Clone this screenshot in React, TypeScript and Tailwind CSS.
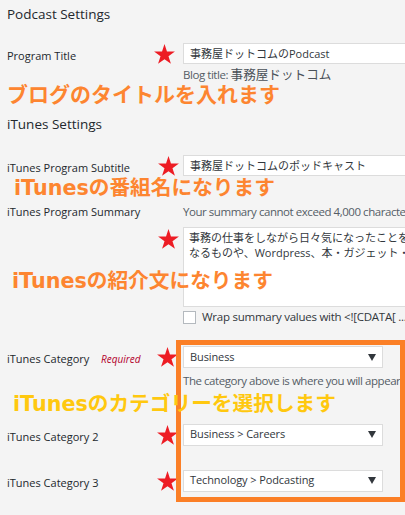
import React from "react";

const StarSvg = () => (
  <svg width="21" height="20" viewBox="0 0 20 19.1">
    <polygon
      fill="#ed1c24"
      points="10,0 12.35,7.24 19.96,7.24 13.8,11.71 16.15,18.95 10,14.47 3.85,18.95 6.2,11.71 0.04,7.24 7.65,7.24"
    />
  </svg>
);

const Star = ({ pl = "pl-[7px]" }: { pl?: string }) => (
  <div className={`w-[36px] shrink-0 flex items-center ${pl}`}>
    <StarSvg />
  </div>
);

const Arrow = () => (
  <svg width="8" height="7" viewBox="0 0 8 7" className="shrink-0">
    <polygon points="0,0 8,0 4,7" fill="#32373c" />
  </svg>
);

const Select = ({ value }: { value: string }) => (
  <div className="w-[200px] h-[22px] shrink-0 bg-white border border-[#dcdcdc] flex items-center justify-between pl-[6px] pr-[6px] text-[11px] tracking-[-0.1px] text-[#32373c]">
    <span>{value}</span>
    <Arrow />
  </div>
);

const label = "w-[147px] shrink-0 pl-[7px] text-[11px] text-[#23282d] leading-[16px]";
const desc = "text-[11.5px] tracking-[-0.45px] leading-[16px] text-[#555d66] whitespace-nowrap";
const note =
  "font-['DejaVu_Sans','Noto_Sans_CJK_JP',sans-serif] font-bold text-[20.7px] leading-[24px] whitespace-nowrap";
const field =
  "w-[240px] shrink-0 h-[21px] bg-white border border-[#dcdcdc] pl-[6px] text-[11px] leading-[19px] text-[#32373c] whitespace-nowrap";

export default function App() {
  return (
    <div className="w-[405px] h-[515px] bg-[#f4f4f4] overflow-hidden font-['Open_Sans','Noto_Sans_CJK_JP',sans-serif] text-[#23282d]">
      <div className="pl-[7px] pt-[4px] h-[43px] text-[13.5px] leading-[20px] font-medium">
        Podcast Settings
      </div>

      {/* Program Title */}
      <div className="flex h-[21px] items-center">
        <div className={`${label} pt-[4px]`}>Program Title</div>
        <Star pl="pl-[7px]" />
        <div className={field}>事務屋ドットコムのPodcast</div>
      </div>
      <div className={`pl-[183px] mt-[3px] h-[16px] ${desc}`}>
        Blog title: <span className="text-[12.6px] tracking-normal text-[#4a5158]">事務屋ドットコム</span>
      </div>
      <div className={`${note} pl-[7px] h-[24px] text-[#fd8530] text-[21px]`}>
        ブログのタイトルを入れます
      </div>

      <div className="pl-[7px] mt-[7px] h-[20px] text-[13.5px] leading-[20px] font-medium">
        iTunes Settings
      </div>

      {/* Subtitle */}
      <div className="flex h-[21px] items-center mt-[21px]">
        <div className={`${label} pt-[4px]`}>iTunes Program Subtitle</div>
        <Star pl="pl-[11px]" />
        <div className={field}>事務屋ドットコムのポッドキャスト</div>
      </div>
      <div className={`${note} pl-[14px] h-[24px] text-[#fd8530]`}>iTunesの番組名になります</div>

      {/* Summary */}
      <div className="flex h-[16px] mt-[4px]">
        <div className="w-[183px] shrink-0 pl-[7px] text-[11px] leading-[16px]">iTunes Program Summary</div>
        <div className={desc}>Your summary cannot exceed 4,000 characters</div>
      </div>
      <div className="relative flex mt-[7px] h-[80px]">
        <div className="w-[147px] shrink-0" />
        <div className="w-[36px] shrink-0 pl-[11px] pt-[2px]">
          <StarSvg />
        </div>
        <div className="w-[240px] shrink-0 h-[80px] bg-white border border-[#dcdcdc] pl-[5px] pt-[2px] text-[11px] leading-[15px] text-[#32373c] whitespace-nowrap overflow-hidden">
          事務の仕事をしながら日々気になったことを
          <br />
          なるものや、Wordpress、本・ガジェット・
        </div>
        <div className={`${note} absolute left-[12px] top-[42px] text-[#fd8530]`}>
          iTunesの紹介文になります
        </div>
      </div>
      <div className="flex items-center h-[16px] mt-[2px] pl-[183px]">
        <div className="w-[13px] h-[13px] bg-white border border-[#b4b9be] shrink-0" />
        <span className="ml-[6px] text-[11.5px] tracking-[-0.25px] leading-[16px] text-[#32373c] whitespace-nowrap">
          Wrap summary values with &lt;![CDATA[ ... ]]&gt;
        </span>
      </div>

      {/* Categories */}
      <div className="relative mt-[15px] pt-[6px] h-[162px]">
        <div className="absolute left-[176px] top-0 w-[229px] h-[162px] border-[5px] border-[#fb7f26]" />
        <div className="flex items-center h-[22px]">
          <div className="w-[147px] shrink-0 pl-[7px] pt-[4px] flex items-baseline">
            <span className="text-[11px] leading-[16px] w-[94px]">iTunes Category</span>
            <span className="italic text-[10px] leading-[16px] text-[#b3002d]">Required</span>
          </div>
          <Star pl="pl-[10px]" />
          <Select value="Business" />
        </div>
        <div className={`pl-[183px] mt-[5px] h-[16px] ${desc}`}>
          The category above is where you will appear in iTunes.
        </div>
        <div className={`${note} absolute left-[13px] top-[52px] text-[#ffc80f]`}>
          iTunesのカテゴリーを選択します
        </div>
        <div className="flex items-center h-[23px] mt-[34px]">
          <div className={`${label} pt-[4px]`}>iTunes Category 2</div>
          <Star pl="pl-[10px]" />
          <Select value="Business > Careers" />
        </div>
        <div className="flex items-center h-[23px] mt-[23px]">
          <div className={`${label} pt-[4px]`}>iTunes Category 3</div>
          <Star pl="pl-[10px]" />
          <Select value="Technology > Podcasting" />
        </div>
      </div>
    </div>
  );
}
